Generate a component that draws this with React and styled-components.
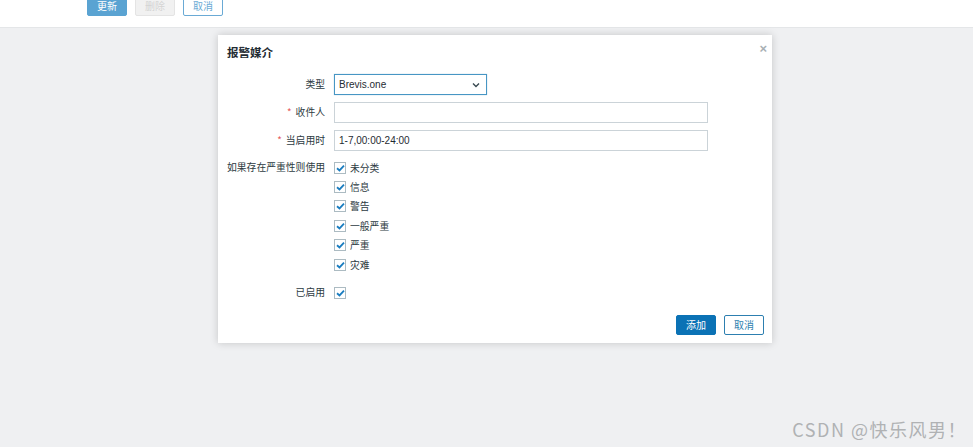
import React from "react";
import styled, { createGlobalStyle } from "styled-components";

const GlobalStyle = createGlobalStyle`
  html, body {
    margin: 0;
    padding: 0;
    background: #eff0f2;
    font-family: "Liberation Sans", "Noto Sans CJK SC", sans-serif;
  }
`;

const Page = styled.div`
  width: 973px;
  height: 447px;
  overflow: hidden;
  position: relative;
  background: #eff0f2;
`;

const TopBar = styled.div`
  height: 27px;
  background: #ffffff;
  border-bottom: 1px solid #e4e6e8;
  display: flex;
  gap: 8px;
  padding-left: 87px;
  overflow: hidden;
`;

const Button = styled.button`
  height: 20px;
  margin-top: ${(p) => (p.$top ? "-4px" : "0")};
  min-width: 40px;
  padding: 0 8px;
  border-radius: 2px;
  font-family: "Noto Sans CJK SC", sans-serif;
  font-size: 10px;
  line-height: 18px;
  cursor: pointer;
  background: ${(p) =>
    p.$variant === "primary" ? p.$bg : p.$variant === "disabled" ? "#f1f1f1" : "#ffffff"};
  color: ${(p) =>
    p.$variant === "primary" ? "#ffffff" : p.$variant === "disabled" ? "#d4d4d4" : p.$bg};
  border: 1px solid
    ${(p) => (p.$variant === "disabled" ? "#e4e4e4" : p.$bg)};
`;

const Dialog = styled.div`
  margin: 7px 0 0 218px;
  width: 554px;
  background: #ffffff;
  box-shadow: 0 0 8px rgba(0, 0, 0, 0.18);
  position: relative;
  box-sizing: border-box;
  padding: 8px 8px 8px 9px;
`;

const Header = styled.div`
  display: flex;
  justify-content: space-between;
  align-items: flex-start;
  height: 24px;
  padding-top: 1px;
`;

const Title = styled.h4`
  margin: 0;
  font-family: "Noto Sans CJK SC", sans-serif;
  font-size: 11.5px;
  font-weight: 700;
  color: #1f2c33;
  line-height: 16px;
`;

const Close = styled.span`
  margin-top: -2px;
  margin-right: -3px;
  color: #a8b0b4;
  font-size: 13px;
  line-height: 13px;
  font-weight: 700;
`;

const Form = styled.div`
  display: grid;
  grid-template-columns: 98px 1fr;
  column-gap: 9px;
  row-gap: 7px;
  margin-top: 6px;
`;

const Label = styled.label`
  text-align: right;
  font-family: "Noto Sans CJK SC", sans-serif;
  font-size: 9.8px;
  color: #2d3b42;
  line-height: ${(p) => p.$lh || "21px"};
  white-space: nowrap;
  margin-top: ${(p) => p.$mt || "0"};
`;

const Req = styled.span`
  color: #e45959;
  margin-right: 4px;
`;

const SelectBox = styled.div`
  width: 153px;
  height: 21px;
  box-sizing: border-box;
  border: 1px solid #4796c4;
  box-shadow: 0 0 1px rgba(71, 150, 196, 0.5);
  display: flex;
  align-items: center;
  justify-content: space-between;
  padding: 0 6px 0 4px;
  font-size: 10px;
  color: #1f2c33;
`;

const Input = styled.div`
  width: 374px;
  height: 21px;
  box-sizing: border-box;
  border: 1px solid #cbd3d8;
  display: flex;
  align-items: center;
  padding: 0 4px;
  font-size: 10px;
  color: #1f2c33;
`;

const CheckList = styled.div`
  display: flex;
  flex-direction: column;
  margin-top: ${(p) => p.$mt || "0"};
`;

const CheckItem = styled.div`
  height: 19.4px;
  display: flex;
  align-items: center;
  gap: 4px;
  font-family: "Noto Sans CJK SC", sans-serif;
  font-size: 9.8px;
  color: #2d3b42;
`;

const Box = styled.span`
  width: 12px;
  height: 12px;
  box-sizing: border-box;
  border: 1px solid #acbbc2;
  background: #fff;
  display: flex;
  align-items: center;
  justify-content: center;
`;

const Footer = styled.div`
  display: flex;
  justify-content: flex-end;
  gap: 8px;
  margin-top: 12px;
`;

const Watermark = styled.div`
  position: absolute;
  right: 6px;
  bottom: 5px;
  font-family: "Noto Sans CJK SC", "Noto Sans", sans-serif;
  font-size: 18px;
  letter-spacing: 1.5px;
  color: #b0b2b4;
  white-space: nowrap;
`;

const Check = ({ label }) => (
  <CheckItem>
    <Box>
      <svg width="9" height="8" viewBox="0 0 9 8">
        <path d="M1 4.2 L3.5 6.4 L8 1.6" fill="none" stroke="#1a7dc0" strokeWidth="1.8" />
      </svg>
    </Box>
    {label}
  </CheckItem>
);

const severities = ["未分类", "信息", "警告", "一般严重", "严重", "灾难"];

export default function App() {
  return (
    <Page>
      <GlobalStyle />
      <TopBar>
        <Button $top $variant="primary" $bg="#5aa3d2">更新</Button>
        <Button $top $variant="disabled">删除</Button>
        <Button $top $variant="outline" $bg="#6aaad5">取消</Button>
      </TopBar>
      <Dialog>
        <Header>
          <Title>报警媒介</Title>
          <Close>×</Close>
        </Header>
        <Form>
          <Label>类型</Label>
          <SelectBox>
            <span>Brevis.one</span>
            <svg width="8" height="6" viewBox="0 0 8 6">
              <path d="M1 1.5 L4 4.5 L7 1.5" fill="none" stroke="#3a4a52" strokeWidth="1.4" />
            </svg>
          </SelectBox>

          <Label><Req>*</Req>收件人</Label>
          <Input />

          <Label><Req>*</Req>当启用时</Label>
          <Input>1-7,00:00-24:00</Input>

          <Label $lh="19.4px">如果存在严重性则使用</Label>
          <CheckList>
            {severities.map((s) => (
              <Check key={s} label={s} />
            ))}
          </CheckList>

          <Label $lh="19.4px" $mt="2px">已启用</Label>
          <CheckList $mt="2px">
            <Check label="" />
          </CheckList>
        </Form>
        <Footer>
          <Button $variant="primary" $bg="#0b72b5">添加</Button>
          <Button $variant="outline" $bg="#2d7fb0">取消</Button>
        </Footer>
      </Dialog>
      <Watermark>CSDN @快乐风男！</Watermark>
    </Page>
  );
}
